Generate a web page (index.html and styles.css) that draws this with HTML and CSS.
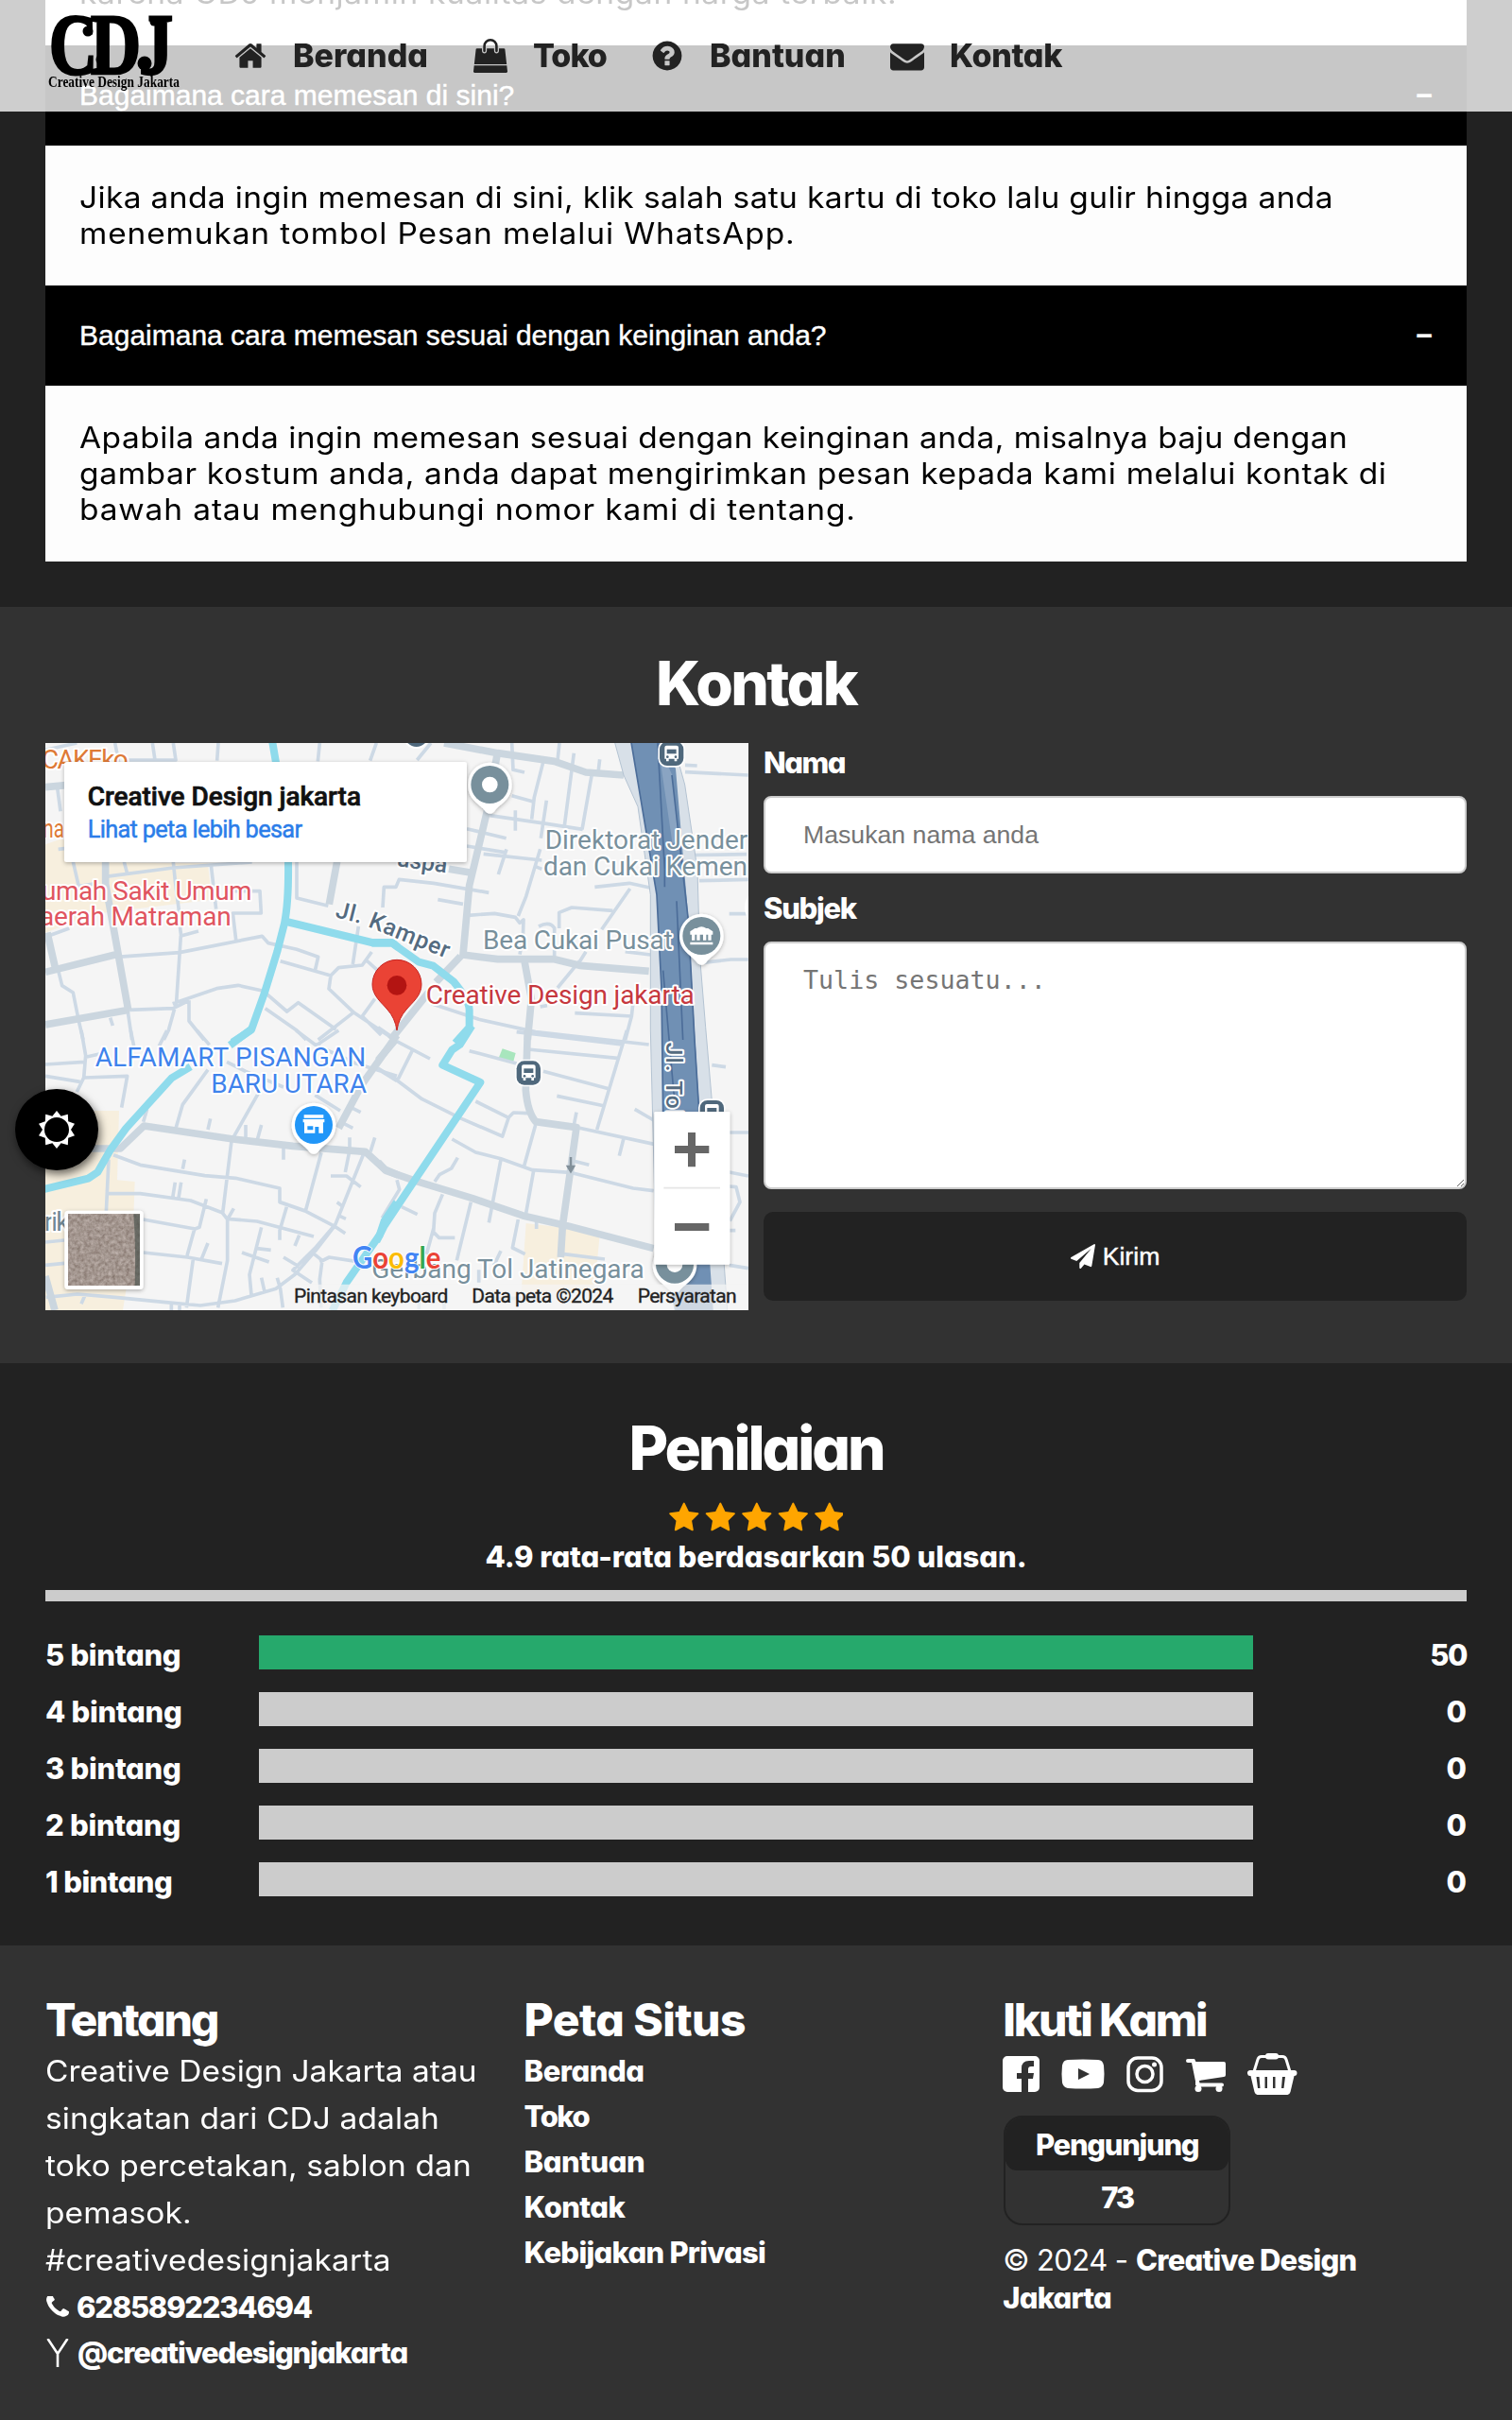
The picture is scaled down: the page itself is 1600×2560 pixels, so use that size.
FILE: index.html
```html
<!DOCTYPE html>
<html lang="id">
<head>
<meta charset="utf-8">
<title>Creative Design Jakarta</title>
<link rel="stylesheet" href="styles.css">
</head>
<body>
<header class="nav">
  <svg class="logo" viewBox="0 0 140 118" role="img">
    <g class="logo-word">
      <text x="1" y="78" textLength="51" lengthAdjust="spacingAndGlyphs">C</text>
      <text x="45" y="78" textLength="53" lengthAdjust="spacingAndGlyphs">D</text>
      <text x="96" y="78" textLength="36" lengthAdjust="spacingAndGlyphs">J</text>
    </g>
    <circle cx="42" cy="33" r="5.500"/><circle cx="56" cy="63" r="5.500"/><circle cx="102" cy="67" r="7.500"/><circle cx="112" cy="23" r="4.500"/>
    <text class="logo-sub" x="0" y="92" textLength="139" lengthAdjust="spacingAndGlyphs">Creative Design Jakarta</text>
  </svg>
  <nav class="menu">
    <a class="menu-item"><svg viewBox="0 0 1792 1792"><path d="M1472 992v480q0 26-19 45t-45 19h-384v-384h-256v384h-384q-26 0-45-19t-19-45v-480q0-1 .5-3t.5-3l575-474 575 474q1 2 1 6zm223-69l-62 74q-8 9-21 11h-3q-13 0-21-7l-692-577-692 577q-12 8-24 7-13-2-21-11l-62-74q-8-10-7-23.5t11-21.5l719-599q32-26 76-26t76 26l244 204v-195q0-14 9-23t23-9h192q14 0 23 9t9 23v408l219 182q10 8 11 21.5t-7 23.5z"/></svg><span>Beranda</span></a>
    <a class="menu-item"><svg viewBox="0 0 1792 1792"><path d="M1757 1408l35 313q3 28-16 50-19 21-48 21h-1664q-29 0-48-21-19-22-16-50l35-313h1722zm-93-839l86 775h-1708l86-775q3-24 21-40.5t43-16.5h256v128q0 53 37.5 90.5t90.5 37.5 90.5-37.5 37.5-90.5v-128h384v128q0 53 37.5 90.5t90.5 37.5 90.5-37.5 37.5-90.5v-128h256q25 0 43 16.5t21 40.5zm-384-185v256q0 26-19 45t-45 19-45-19-19-45v-256q0-106-75-181t-181-75-181 75-75 181v256q0 26-19 45t-45 19-45-19-19-45v-256q0-159 112.5-271.5t271.5-112.5 271.5 112.5 112.5 271.5z"/></svg><span class="k10">Toko</span></a>
    <a class="menu-item"><svg viewBox="0 0 1792 1792"><path d="M1024 1376v-192q0-14-9-23t-23-9h-192q-14 0-23 9t-9 23v192q0 14 9 23t23 9h192q14 0 23-9t9-23zm256-672q0-88-55.5-163t-138.5-116-170-41q-243 0-371 213-15 24 8 42l132 100q7 6 19 6 16 0 25-12 53-68 86-92 34-24 86-24 48 0 85.5 26t37.5 59q0 38-20 61t-68 45q-63 28-115.5 86.5t-52.5 125.5v36q0 14 9 23t23 9h192q14 0 23-9t9-23q0-19 21.5-49.5t54.5-49.5q32-18 49-28.5t46-35 44.5-48 28-60.5 12.5-81zm384 192q0 209-103 385.5t-279.5 279.5-385.5 103-385.5-103-279.5-279.5-103-385.5 103-385.5 279.5-279.5 385.5-103 385.5 103 279.5 279.5 103 385.5z"/></svg><span>Bantuan</span></a>
    <a class="menu-item"><svg viewBox="0 0 1792 1792"><path d="M1792 710v794q0 66-47 113t-113 47h-1472q-66 0-113-47t-47-113v-794q44 49 101 87 362 246 497 345 57 42 92.5 65.5t94.5 48 110 24.5h2q51 0 110-24.5t94.5-48 92.5-65.5q170-123 498-345 57-39 100-87zm0-294q0 79-49 151t-122 123q-376 261-468 325-10 7-42.5 31t-54 38.5-52 32.5-57.5 27-50 9h-2q-23 0-50-9t-57.5-27-52-32.5-54-38.5-42.5-31q-91-64-262-182.5t-205-142.5q-62-42-117-115.5t-55-136.5q0-78 41.5-130t118.5-52h1472q65 0 112.500 47t47.500 113z"/></svg><span class="k3">Kontak</span></a>
  </nav>
</header>

<section class="faq">
  <div class="panel panel-cut"><p class="w6">karena CDJ menjamin kualitas dengan harga terbaik.</p></div>
  <div class="question"><span>Bagaimana cara memesan di sini?</span><b>−</b></div>
  <div class="panel">
    <p class="w3">Jika anda ingin memesan di sini, klik salah satu kartu di toko lalu gulir hingga anda</p>
    <p class="w8">menemukan tombol Pesan melalui WhatsApp.</p>
  </div>
  <div class="question"><span>Bagaimana cara memesan sesuai dengan keinginan anda?</span><b>−</b></div>
  <div class="panel">
    <p class="w4">Apabila anda ingin memesan sesuai dengan keinginan anda, misalnya baju dengan</p>
    <p class="w6">gambar kostum anda, anda dapat mengirimkan pesan kepada kami melalui kontak di</p>
    <p class="w8">bawah atau menghubungi nomor kami di tentang.</p>
  </div>
</section>

<section class="contact">
  <h1 class="k25">Kontak</h1>
  <div class="contact-grid">
    <svg class="map" viewBox="0 0 744 600">
      <defs>
        <filter id="ground" x="0" y="0" width="1" height="1">
          <feTurbulence type="fractalNoise" baseFrequency="0.09" numOctaves="3" seed="4"/>
          <feColorMatrix values="0.35 0 0 0 0.34  0.35 0 0 0 0.28  0.35 0 0 0 0.25  0 0 0 0 1"/>
          <feComponentTransfer><feFuncR type="gamma" exponent="1.5"/><feFuncG type="gamma" exponent="1.5"/><feFuncB type="gamma" exponent="1.5"/></feComponentTransfer>
        </filter>
        <filter id="lift" x="-20%" y="-20%" width="140%" height="150%"><feDropShadow dx="0" dy="4" stdDeviation="6" flood-opacity=".3"/></filter>
        <g id="bus"><rect x="-43" y="-43" width="86" height="86" rx="28" fill="#fff"/><rect x="-38" y="-38" width="76" height="76" rx="24" fill="#4f687c"/><path d="M-22-20q0-6 6-6h32q6 0 6 6v36h-5v8h-8v-8h-18v8h-8v-8h-5z" fill="#fff"/><path d="M-15-14h30v14h-30z" fill="#4f687c"/><circle cx="-13" cy="10" r="4" fill="#4f687c"/><circle cx="13" cy="10" r="4" fill="#4f687c"/></g>
        <path id="pin" d="M0 92q-10 0-18-12c-12-16-52-32-52-80a70 70 0 0 1 140 0c0 48-40 64-52 80q-8 12-18 12z" fill="#fff" filter="url(#lift)"/>
      </defs>
      <rect width="744" height="600" fill="#f5f5f5"/>
      <!-- built-up areas -->
      <g fill="#f7efde">
        <path transform="translate(-48 -26) scale(.33333)" d="M144 400l56-20 35 76 425 4 12 115-372 45-156 60z"/>
        <path transform="translate(-48 304) scale(.33333)" d="M300 255h78l-6 220 56 5-8 220-30 188H144V440z"/>
        <path transform="translate(352 304) scale(.33333)" d="M470 612l235 28-8 80-12 110H455z"/>
        <path transform="translate(352 304) scale(.33333)" d="M395 58l42 14-8 30-46-14z" fill="#a8e6bd"/>
      </g>
      <!-- side streets -->
      <g class="street">
        <path transform="translate(-48 -26) scale(.33333)" d="M144 100l100-22M365 78l12 60M484 78l8 54M550 78l8 54h-150M693 78l-4 56M1015 78l-6 58M1195 78l-20 56M182 220l10 75M185 415l45-5M232 455l18 78 60-10M394 455l10 38M335 502l215-28 250-18M550 455l6 60 14 110M670 465l16 140M740 548h85l4 70h-90l10 84M942 455v115l100 25M160 688l60-22M370 757l200-14 262-52 20 22 90 20 68 24-10 44M570 650l5 40 55-15M574 690l-14 210-25 90-15 30M185 800l12 48 35 22 18 90 14 60M405 925l14 95M350 950l8 25M410 925l140-5 50-25M548 905l140-48 68-10 80 18 75 65 36-28 120 85M600 895v65l48 60M842 920l100 70 30 30M890 770l160 46-6 42 80 76 120 80M1050 816l25-25 75-8 30-42M1160 765l45 40M1120 780l18-120M1010 1020l110-85M1190 890l-40 55 60 60"/>
        <path transform="translate(352 -26) scale(.33333)" d="M168 78l-44 54M425 78l4 85 36 8M576 78l-6 56M622 110l-30 230M704 130l-6 50M524 140l-28 110-8 70M678 182l-30 170M425 245l65 18M535 260l-18 120M436 292v64M355 308l180 26 115 18M282 350l125 30M282 405l120 20M335 430l185 20M408 415l-26 80M515 415l-45 150-25 62M500 470l20 8M15 600l4-65h38l10-24 110 12 175 30M190 575l80 14M285 625l85-6 66 12 14 18 12-10-2 60-10 50M688 535l110-12 65 14M800 540l-90 130M745 610l-130-10-40 16v50M510 660q35-18 50 5v90M975 148l38 2M975 170l200 10M900 435l270-4M1020 515l155-4M1115 620h60M1030 775l90-10h55M640 770l-70 85M660 740l-25 40M170 905l150 50 180 40 360 40M625 935l180 10-20 75M810 900l-5 45M515 915l22-4M0 980l40 28M785 740l80 10"/>
        <path transform="translate(-48 304) scale(.33333)" d="M258 0l14 80-6 70-22 45M415 0l12 60M144 108l124-8M144 145l110 18M268 150l136-5-18 100M272 85l60-14M530 0l-25 50M625 0l40 46M660 125l-80 110-26 90M455 290l12-40M820 200l-85 150-28 230M720 100l60 30 120 50M940 0l60 45 130 60 130 40M1075 0l-75 50M1195 120l65 40M668 280l-8 35M780 300v50M830 300l-14 50M1115 245l30 15M1080 290l40 20M1000 205l80 50M360 395l85 32 205 34 98 8 140 32v44l80 28 92 48-60 70-70 70 60 40M890 545l80 28 50-185M1110 340v40l-14 70M1190 340l-14 45M1050 462h50l45 35M1155 390l-92 230-62 80-65 75-60 45-130 38-110 15-110-10-160-16-120-10-100 10M345 410l-10 210M340 518h105l160 22 100 38 16 20 95 8 180 48M556 482l-8 50M575 482l-8 50M580 440l6-30M655 535l-22 90-14 5-165-30M742 565l-20 35v130l-30 150M619 625l-25 90M455 705l140 15 110 20M660 675l-20 50M614 720l-22 160M830 625l-38 150 6 65M768 705l86 30M815 692l45 5M888 665v-30l22-75M950 650l-14 34M900 720l50 30M830 785l10 45M880 785l10 35 8 60M1070 545l20 15M1080 590l18 8M1060 620l36 24M985 700l38 30-8 60 4 90M1015 735l30-15 90 14M144 672l60-6M144 745l60-6M544 870v18M570 870v18M900 375v35M270 840l-12 28"/>
        <path transform="translate(352 304) scale(.33333)" d="M0 120l60 38 80 60 120 60 135 58 20-60 15-15 45 2M110 62l-46 92M60 35l105 55M310 225l100 50M290 65l150 40M440 5l335 40M475 60l285 28M790 0L695 315M525 130l210 56M568 208l152 32M630 260l-8 40M640 310l240 52M780 342l-14 56M815 250l60 35M500 300l-36 130M235 345l75 42 80 20 100 36 120 8 200 50 65 8M390 410l-38 200M495 440l-25 140M610 412l60 15M1115 324h61M1115 450l61 12M1115 495l22 2 12 48-32 60M1115 635h20M1115 745l61 10M180 480l15-22 38-20 20-34M75 560l50 24M205 520l-25 60-4 60 18 18h50M176 630l-22 80M295 545l-45 185M445 600l-18 90 40 20M503 600v30M390 700l-22 46M320 800v-40M60 475l8 30-55 90M590 710l130 16M130 830v55M210 840v45M320 850h200M1060 110l44 6"/>
      </g>
      <!-- main roads -->
      <g class="road">
        <path transform="translate(-48 -26) scale(.33333)" d="M144 218l66-6M335 455v70l30 165 42 235M144 805l221-55M144 972l266-47M150 680l25 110M1070 455l-25 135"/>
        <path transform="translate(352 -26) scale(.33333)" d="M210 78l170 32 180 26 100 35 120 9M380 105l-35 195-55 230-20 220 110 14h180l80 20 220 18M262 755l-78 82M160 870L40 1020M465 770l22 120-12 130M225 478l72 12"/>
        <path transform="translate(-48 304) scale(.33333)" d="M290 375h92l75-72 283 42 190 22 230 18 60 55 45 20M1260 15l-110 155-75 140M144 780l30 108"/>
        <path transform="translate(352 304) scale(.33333)" d="M0 418l25 27 95 33 180 55 160 55 140 32 275 72M475 0l-6 190q6 70 32 100l129 18-20 142-24 170-6 100M0 95l55-65"/>
      </g>
      <!-- river -->
      <g class="water">
        <path transform="translate(-48 -26) scale(.33333)" d="M864 70l12 70M915 450q2 130-12 200l-23 90-40 130-42 118-60 40M910 645l270 66h65l20 16"/>
        <path transform="translate(352 -26) scale(.33333)" d="M-20 713h65l85 60 45 12 65 50q50 60 50 90v55l-45 50"/>
        <path transform="translate(-48 304) scale(.33333)" d="M800-5l-70 52M605 115l-60 36-145 160-50 69-40 70-30 20-140 34M1260 545l-40 60-15 45-35 50-70 100-45 90"/>
        <path transform="translate(352 304) scale(.33333)" d="M298-15l-38 60-25 17-30 48 120 55-195 290-110 165-25 50"/>
      </g>
      <!-- toll road -->
      <g transform="translate(352 -26) scale(.33333)">
        <path d="M750 70l30 110 45 100 40 280v430l15 600 65 300h165l-40-560-30-350-18-220-8-280-40-270-39-140z" fill="#d8e0e8" stroke="#b4c3d2" stroke-width="3"/>
        <path d="M803 70l82 490 15 300 5 400 15 500 25 130h120l-40-570-20-330-20-360-40-470-35-90z" fill="#7090b4"/>
        <path d="M888 78l45 100 22 200-20 20z" fill="#8aa4c2"/>
        <path d="M803 70l82 490 15 300 5 400M888 78l22 400M933 180l52 460 20 380 15 240M910 440v95M948 580l20 440M905 800l35 400" fill="none" stroke="#4c6d99" stroke-width="5"/>
      </g>
      <path d="M556 438v10M553 448l3 5 3-5z" stroke="#82909a" stroke-width="2.500" fill="#82909a"/>
      <!-- place names -->
      <g class="label" transform="translate(-48 -26) scale(.33333)">
        <text x="132" y="160" textLength="275" fill="#de7a36">CAKEko</text>
        <text x="136" y="378" textLength="68" lengthAdjust="spacingAndGlyphs" fill="#de7a36">na</text>
        <text x="132" y="575" textLength="668" fill="#e05560">umah Sakit Umum</text>
        <text x="126" y="658" textLength="608" fill="#e05560">aerah Matraman</text>
      </g>
      <g class="label" transform="translate(352 -26) scale(.33333)" fill="#78909c">
        <text x="530" y="413" textLength="644">Direktorat Jender</text>
        <text x="525" y="497" textLength="648">dan Cukai Kemen</text>
        <text x="333" y="732" textLength="602">Bea Cukai Pusat</text>
        <text x="152" y="905" textLength="852" fill="#c6383e">Creative Design jakarta</text>
        <text class="street-name" transform="translate(58 468) rotate(8)" textLength="160">uspa</text>
        <text class="street-name" transform="translate(-138 630) rotate(14)" textLength="85">Jl.</text>
        <text class="street-name" transform="translate(-34 660) rotate(22)" textLength="270">Kamper</text>
      </g>
      <g class="label" transform="translate(-48 304) scale(.33333)" fill="#3f83ec">
        <text x="302" y="113" textLength="860">ALFAMART PISANGAN</text>
        <text x="670" y="197" textLength="494">BARU UTARA</text>
        <text x="140" y="635" textLength="80" fill="#718794">rik</text>
      </g>
      <g class="label" transform="translate(352 304) scale(.33333)" fill="#78909c">
        <text x="-20" y="785" textLength="865">Gerbang Tol Jatinegara</text>
        <text class="street-name" transform="translate(914 38) rotate(90)" textLength="235" fill="#3c5878">Jl. Tol</text>
      </g>
      <!-- markers -->
      <g transform="translate(352 -26) scale(.33333)">
        <circle cx="122" cy="52" r="44" fill="#fff"/><circle cx="122" cy="52" r="38" fill="#4f687c"/>
        <use href="#bus" x="932" y="112"/>
        <use href="#pin" x="355" y="210"/><circle cx="355" cy="210" r="60" fill="#78909c"/><circle cx="355" cy="210" r="25" fill="#fff"/>
        <use href="#pin" x="1027" y="690"/><circle cx="1027" cy="690" r="60" fill="#78909c"/><path d="M991 676l15-10h6q15-10 30 0h6l15 10v10h-5v18h-10v-18h-6v18h-10v-18h-10v18h-10v-18h-6v18h-10v-18h-5zM991 710h72v8h-72z" fill="#fff"/>
        <circle cx="1230" cy="600" r="66" fill="#fff"/>
        <path d="M60 990q-6-40-30-66c-20-24-48-44-48-80a78 78 0 0 1 156 0c0 36-28 56-48 80q-24 26-30 66z" fill="#ea4335" stroke="#c5221f" stroke-width="3"/><circle cx="60" cy="847" r="31" fill="#b31412"/>
      </g>
      <g transform="translate(-48 304) scale(.33333)">
        <use href="#pin" x="996" y="300"/><circle cx="996" cy="300" r="60" fill="#2196f8"/><path d="M965 268h62v10h-62zM962 282h68v10h-4v34h-14v-20h-12v20h-34v-34h-4zM976 304v12h18v-12z" fill="#fff" fill-rule="evenodd"/>
      </g>
      <g transform="translate(352 304) scale(.33333)">
        <use href="#bus" x="478" y="135"/><use href="#bus" x="1060" y="260"/>
        <use href="#pin" x="942" y="743"/><circle cx="942" cy="743" r="60" fill="#78909c"/><circle cx="942" cy="743" r="25" fill="#fff"/>
      </g>
      <!-- map controls -->
      <g transform="translate(-48 304) scale(.33333)">
        <path d="M920 806h1456v82H920z" fill="#f5f5f5" opacity=".7"/>
        <rect x="205" y="572" width="250" height="250" rx="12" fill="#fff" filter="url(#lift)"/>
        <rect x="216" y="583" width="228" height="227" fill="#80716a" filter="url(#ground)"/>
        <path d="M424 583h20v227h-16q4-120-4-227z" fill="#4e5650" opacity=".7"/>
        <text class="google" x="1119" y="755" textLength="280" lengthAdjust="spacingAndGlyphs"><tspan fill="#4285f4">G</tspan><tspan fill="#ea4335">o</tspan><tspan fill="#fbbc04">o</tspan><tspan fill="#4285f4">g</tspan><tspan fill="#34a853">l</tspan><tspan fill="#ea4335">e</tspan></text>
        <g class="terms">
          <text x="933" y="863" textLength="490">Pintasan keyboard</text>
          <text x="1498" y="863" textLength="450">Data peta ©2024</text>
          <text x="2024" y="863" textLength="315">Persyaratan</text>
        </g>
        <rect x="2077" y="258" width="240" height="485" rx="4" fill="#fff" filter="url(#lift)"/>
        <path d="M2107 500h179" stroke="#e6e6e6" stroke-width="5"/>
        <path d="M2142 378h109M2196 324v109M2142 624h109" stroke="#666" stroke-width="24"/>
      </g>
      <g transform="translate(-48 -26) scale(.33333)">
        <rect x="204" y="138" width="1278" height="318" rx="8" fill="#fff" filter="url(#lift)"/>
        <text class="card-title" x="278" y="275" textLength="868">Creative Design jakarta</text>
        <text class="card-link" x="278" y="377" textLength="682">Lihat peta lebih besar</text>
      </g>
    </svg>
    <form class="form">
      <label class="k15">Nama</label>
      <input type="text" placeholder="Masukan nama anda">
      <label class="k13">Subjek</label>
      <textarea placeholder="Tulis sesuatu..."></textarea>
      <button type="button"><svg viewBox="0 0 1792 1792"><path d="M1764 11q33 24 27 64l-256 1536q-5 29-32 45-14 8-31 8-11 0-24-5l-453-185-242 295q-18 23-49 23-13 0-22-4-19-7-30.5-23.5t-11.5-36.5v-349l864-1059-1069 925-395-162q-37-14-40-55-2-40 32-59l1664-960q15-9 32-9 20 0 36 11z"/></svg>Kirim</button>
    </form>
  </div>
</section>

<section class="rating">
  <h1 class="k30">Penilaian</h1>
  <svg class="stars" viewBox="0 0 184 32">
    <defs><path id="star" transform="scale(.01875)" d="M1728 647q0 22-26 48l-363 354 86 500q1 7 1 20 0 21-10.5 35.5t-30.5 14.5q-19 0-40-12l-449-236-449 236q-22 12-40 12-21 0-31.500-14.500t-10.500-35.500q0-6 2-20l86-500-364-354q-25-27-25-48 0-37 56-46l502-73 225-455q19-41 49-41t49 41l225 455 502 73q56 9 56 46z"/></defs>
    <use href="#star" x="-1"/><use href="#star" x="37.500"/><use href="#star" x="76"/><use href="#star" x="114.500"/><use href="#star" x="153"/>
  </svg>
  <p class="summary">4.9 rata-rata berdasarkan 50 ulasan.</p>
  <hr>
  <div class="bars">
    <span class="k3">5 bintang</span><i class="full"></i><span class="count k15">50</span>
    <span class="k3">4 bintang</span><i></i><span class="count">0</span>
    <span class="k3">3 bintang</span><i></i><span class="count">0</span>
    <span class="k3">2 bintang</span><i></i><span class="count">0</span>
    <span class="k6">1 bintang</span><i></i><span class="count">0</span>
  </div>
</section>

<footer class="footer">
  <div>
    <h2 class="k21">Tentang</h2>
    <div class="about">
      <p>Creative Design Jakarta atau</p>
      <p class="w1">singkatan dari CDJ adalah</p>
      <p class="w1">toko percetakan, sablon dan</p>
      <p class="w1">pemasok.</p>
      <p class="w2">#creativedesignjakarta</p>
    </div>
    <a class="reach"><svg class="phone" viewBox="128 256 1472 1472"><path d="M1600 1240q0 27-10 70.5t-21 68.5q-21 50-122 106-94 51-186 51-27 0-53-3.5t-57.5-12.5-47-14.5-55.5-20.5-49-18q-98-35-175-83-127-79-264-216t-216-264q-48-77-83-175-3-9-18-49t-20.5-55.5-14.5-47-12.5-57.5-3.5-53q0-92 51-186 56-101 106-122 25-11 68.500-21t70.500-10q14 0 21 3 18 6 53 76 11 19 30 54t35 63.500 31 53.500q3 4 17.500 25t21.500 35.500 7 28.500q0 20-28.500 50t-62 55-62 53-28.500 46q0 9 5 22.500t8.500 20.500 14 24 11.500 19q76 137 174 235t235 174q2 1 19 11.500t24 14 20.500 8.500 22.500 5q18 0 46-28.500t53-62 55-62 50-28.500q14 0 28.500 7t35.500 21.500 25 17.500q25 15 53.500 31t63.500 35 54 30q70 35 76 53 3 7 3 21z"/></svg><span class="k13">6285892234694</span></a>
    <a class="reach reach-alt"><svg class="fork" viewBox="0 0 26 30"><path d="M2.500 0L13 16 23.500 0M13 16v14" fill="none" stroke="#fff" stroke-width="2.600"/></svg><span class="k12">@creativedesignjakarta</span></a>
  </div>
  <div>
    <h2 class="k6">Peta Situs</h2>
    <nav class="links">
      <a class="k5">Beranda</a><a class="k15">Toko</a><a class="k5">Bantuan</a><a class="k6">Kontak</a><a class="k8">Kebijakan Privasi</a>
    </nav>
  </div>
  <div>
    <h2 class="k21">Ikuti Kami</h2>
    <svg class="social" viewBox="0 0 312 50">
      <path fill-rule="evenodd" d="M5 9h29a5 5 0 0 1 5 5v28a5 5 0 0 1-5 5h-7V33h5l1-6h-6v-4q0-3 3-3h3v-6h-5q-8 0-8 8v5h-5v6h5v14H5a5 5 0 0 1-5-5V14a5 5 0 0 1 5-5z"/>
      <path fill-rule="evenodd" d="M69 13q16-1 32 0 5 0 6 6 1 9 0 18-1 5-6 6-16 1-32 0-5-1-6-6-1-9 0-18 1-6 6-6zM80 22v12l12-6z"/>
      <g fill="none" stroke="#fff" stroke-width="3.500"><rect x="133" y="11" width="35" height="34.500" rx="10"/><circle cx="150.500" cy="28" r="8.500"/></g><circle cx="160.500" cy="18" r="2.500"/>
      <path d="M194 14q0-2 2-2h7l1.500 3H234q2 0 2 2v12q0 2-2 2l-26 4 .5 2.500H232q2 0 2 2t-2 2h-25q-2 0-3-2v-4l-4-19.500h-4q-2 0-2-2z"/><circle cx="207" cy="43.500" r="3.500"/><circle cx="229" cy="43.500" r="3.500"/>
      <g transform="translate(-1.500 0)"><path d="M267.500 25.500l4-13q1-3 4-3h22q3 0 4 3l4 13" fill="none" stroke="#fff" stroke-width="3"/><rect x="279.500" y="6" width="14" height="6.500" rx="3"/>
      <path fill-rule="evenodd" d="M263 25h47a3 3 0 0 1 0 6l-4 17q-1 3-3 3h-32q-2 0-3-3l-4-17a3 3 0 0 1-1-6zM270 32l1.500 12h2.500l-1-12zm9 0v12h2.500v-12zm8.500 0v12h2.500v-12zm10 0l-1 12h2.500l1.500-12z" transform="translate(0 -1)"/></g>
    </svg>
    <div class="visitors"><div class="visitors-head k13">Pengunjung</div><div class="visitors-count k20">73</div></div>
    <p class="copy"><span class="copy-year">© 2024 -</span> <b>Creative Design<br>Jakarta</b></p>
  </div>
</footer>

<button class="theme" type="button"><svg viewBox="-22 -22 44 44"><path fill-rule="evenodd" d="M0-20L4.600-14.300 11.800-16.200 12.200-8.800 19-6.200 15 0 19 6.200 12.200 8.800 11.800 16.200 4.600 14.300 0 20-4.600 14.300-11.800 16.200-12.200 8.800-19 6.200-15 0-19-6.200-12.200-8.800-11.800-16.200-4.600-14.300zM0-13a13 13 0 1 0 0 26a13 13 0 1 0 0-26z"/></svg></button>
</body>
</html>
```
FILE: styles.css
```css
* { box-sizing: border-box; }
body { margin: 0; background: #323232; color: #fff; font: 400 31px/38px Inter, sans-serif; font-kerning: normal; }
h1, h2, p, hr { margin: 0; }

/* display face used by headings, links and counters */
h1, h2, label, .menu-item, .summary, .bars, .reach, .links, .visitors, .copy b {
  font-weight: 800; font-feature-settings: "cv11";
}

/* wide text face for running copy */
.panel p, .about p { transform: scaleX(1.08); transform-origin: 0 0; white-space: nowrap; }

/* tracking: k = tighter, w = wider, in tenths of a pixel */
.k3 { letter-spacing: -.3px; } .k5 { letter-spacing: -.5px; } .k6 { letter-spacing: -.6px; }
.k8 { letter-spacing: -.75px; } .k10 { letter-spacing: -1px; } .k12 { letter-spacing: -1.15px; }
.k13 { letter-spacing: -1.3px; } .k15 { letter-spacing: -1.5px; } .k20 { letter-spacing: -2px; }
.k21 { letter-spacing: -2.2px; } .k25 { letter-spacing: -2.6px; } .k30 { letter-spacing: -3.1px; }
.w1 { letter-spacing: .1px; } .w2 { letter-spacing: .2px; } .w3 { letter-spacing: .33px; }
.w4 { letter-spacing: .44px; } .w6 { letter-spacing: .6px; } .w8 { letter-spacing: .8px; }

.nav { position: fixed; inset: 0 0 auto; z-index: 5; display: flex; align-items: center; height: 118px; padding-left: 51px; background: rgba(255, 255, 255, .78); }
.logo { width: 140px; height: 118px; margin-right: 56px; }
.logo-word { font: 700 92px "Liberation Serif", serif; stroke: #000; stroke-width: 3px; }
.logo-sub { font: 700 17px "Liberation Serif", serif; }
.menu { display: grid; grid-template-columns: 254px 187px 254px auto; color: #222; font-size: 34px; }
.menu-item { display: flex; align-items: center; gap: 27px; }
.menu-item svg { width: 36px; height: 36px; fill: #222; }

.faq { padding: 0 48px 48px; background: #222; }
.panel { padding: 36px; background: #fdfdfd; color: #000; }
.panel-cut { display: flex; align-items: flex-end; height: 48px; padding-top: 0; overflow: hidden; }
.question { display: flex; justify-content: space-between; height: 106px; padding: 36px; background: #000; font: 30px/34px "Liberation Sans", Arial, sans-serif; -webkit-text-stroke: .4px #fff; }

h1 { font-size: 64px; line-height: 66px; text-align: center; }
.contact { padding: 48px 48px 56px; }
.contact-grid { display: grid; grid-template-columns: 744px 744px; gap: 16px; margin-top: 30px; }
.map { display: block; width: 744px; height: 600px; overflow: hidden; }
.street, .road, .water { fill: none; stroke-linejoin: round; }
.street { stroke: #cdd9e5; stroke-width: 11px; }
.road { stroke: #cbd6df; stroke-width: 23px; }
.water { stroke: #8fdbec; stroke-width: 24px; }
.label { font: 400 84px Roboto, sans-serif; paint-order: stroke; stroke: #fff; stroke-width: 12px; stroke-linejoin: round; }
.street-name { font-size: 74px; font-weight: 500; fill: #546b80; }
.google { font: 700 98px Lato, sans-serif; paint-order: stroke; stroke: #fff; stroke-width: 6px; }
.terms { font: 400 63px Roboto, sans-serif; fill: #222; stroke: #222; stroke-width: 1px; }
.card-title { font: 500 84px Roboto, sans-serif; fill: #111; stroke: #111; stroke-width: 2px; }
.card-link { font: 400 76px Roboto, sans-serif; fill: #2b7de9; stroke: #2b7de9; stroke-width: 1.5px; }

.form { display: flex; flex-direction: column; padding-top: 2px; }
.form input, .form textarea { width: 100%; margin: 16px 0 18px; padding: 24px 40px; border: 2px solid #ccc; border-radius: 8px; background: #fff; font-size: 26.67px; }
.form input { height: 82px; font-family: "Liberation Sans", Arial, sans-serif; }
.form textarea { height: 262px; margin-bottom: 24px; padding-top: 23px; font-family: "DejaVu Sans Mono", monospace; }
.form ::placeholder { color: #757575; opacity: 1; }
.form button { display: flex; align-items: center; justify-content: center; gap: 8px; height: 94px; border: 0; border-radius: 10px; background: #222; color: #fff; font: 26.67px "Liberation Sans", Arial, sans-serif; -webkit-text-stroke: .4px #fff; }
.form button svg { width: 26px; height: 26px; fill: #fff; }

.rating { height: 616px; padding: 57px 48px 0; background: #222; }
.stars { display: block; width: 184px; height: 32px; margin: 24px auto 6px; fill: orange; }
.summary { line-height: 40px; text-align: center; letter-spacing: -.04px; }
hr { height: 12px; margin: 15px 0 36px; border: 0; background: #ccc; }
.bars { display: grid; grid-template-columns: 15% 70% 15%; grid-auto-rows: 36px; row-gap: 24px; line-height: 42px; }
.bars i { background: #ccc; }
.bars .full { background: #26a96c; }
.count { text-align: right; }

.footer { display: grid; grid-template-columns: repeat(3, 506.6px); height: 502px; padding: 50px 0 0 48px; }
h2 { font-size: 48px; line-height: 58px; }
.about { line-height: 50px; }
.reach { display: flex; align-items: center; gap: 8px; line-height: 50px; }
.reach-alt { line-height: 46px; }
.phone { width: 25px; height: 25px; fill: #fff; }
.fork { width: 26px; height: 30px; }
.links { display: grid; padding-top: 1px; line-height: 48px; }
.social { display: block; width: 312px; height: 50px; margin: 0 0 22px; fill: #fff; overflow: visible; }
.visitors { width: 240px; height: 116px; margin-left: 1px; border: 2px solid #222; border-radius: 20px; text-align: center; line-height: 57px; }
.visitors-head { height: 56px; border-radius: 18px 18px 12px 12px; background: #222; }
.copy { margin-top: 17px; line-height: 40px; }
.copy b { letter-spacing: -.8px; }
.copy-year { letter-spacing: -.6px; }

.theme { position: fixed; left: 16px; top: 1152px; z-index: 6; display: flex; align-items: center; justify-content: center; width: 88px; height: 86px; padding: 0; border: 0; border-radius: 50%; background: #000; box-shadow: 2px 4px 10px rgba(0, 0, 0, .6); }
.theme svg { width: 44px; height: 44px; fill: #fff; }
```
